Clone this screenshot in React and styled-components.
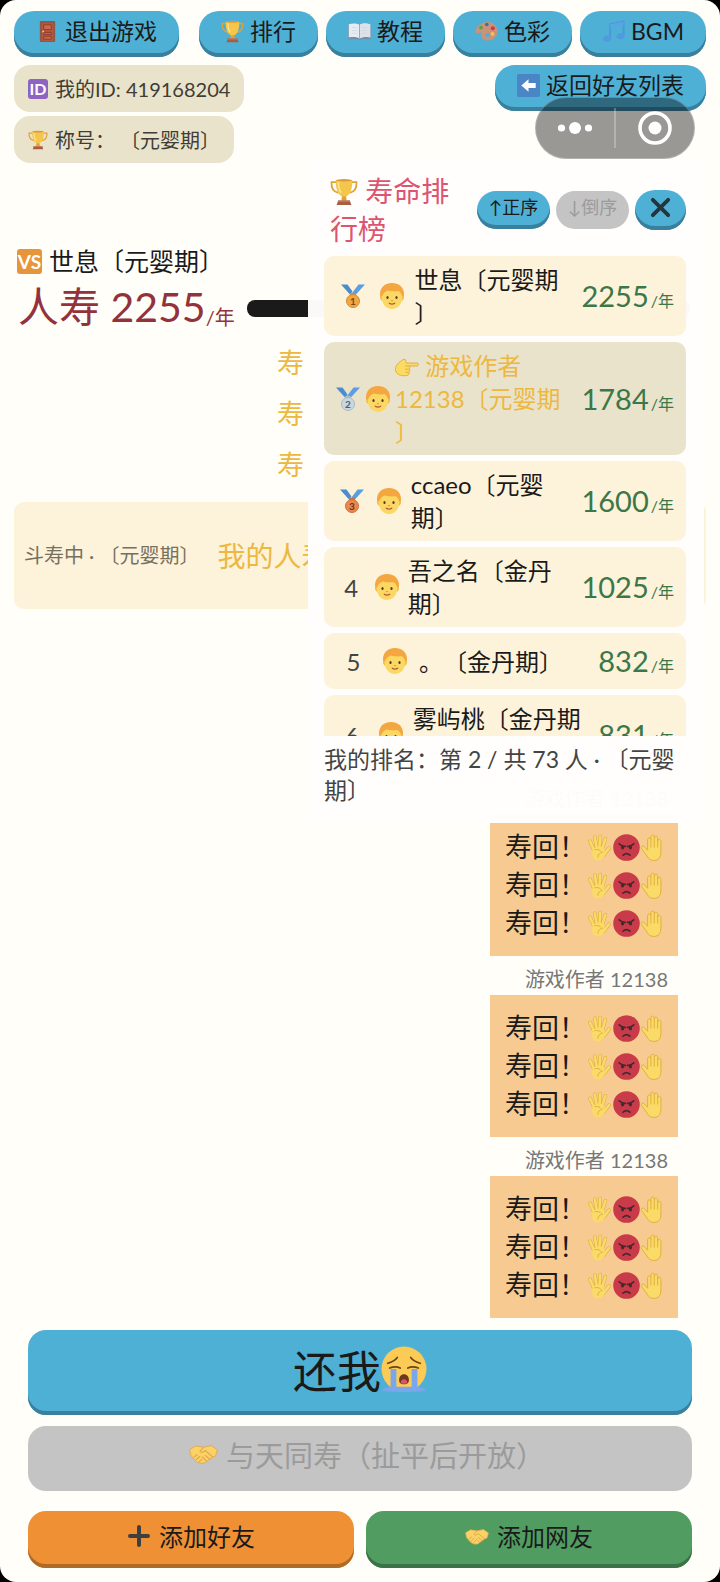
import React from "react";
import styled, { createGlobalStyle } from "styled-components";

const GlobalStyle = createGlobalStyle`
	* { box-sizing: border-box; }
	body {
		margin: 0;
		background: #000;
		font-family: Lato, "Noto Sans CJK SC", sans-serif;
		color: #1a1a1a;
		text-spacing-trim: space-all;
	}
	button {
		font-family: inherit;
		color: inherit;
		margin: 0;
		border: 0;
		cursor: pointer;
	}
	button:disabled { cursor: default; }
`;

const StyledApp = styled.div`
	position: relative;
	display: flex;
	flex-direction: column;
	min-height: 100vh;
	padding: 11px 14px 14px;
	border-radius: 16px;
	background: #fffef9;
	overflow: hidden;
`;

const Icon = styled.svg`
	flex: none;
	width: ${p => p.$size || "1em"};
	height: ${p => p.$size || "1em"};
	display: inline-block;
	vertical-align: -4px;
`;

const TopBar = styled.nav`
	display: flex;
	justify-content: space-between;
`;

const TopBarGroup = styled.div`
	display: flex;
	gap: 8px;
`;

const PillButton = styled.button`
	display: flex;
	align-items: center;
	justify-content: center;
	gap: 6px;
	height: 46px;
	padding: 0 22px 6px;
	border-radius: 20px;
	background: #4fb0d6;
	box-shadow: inset 0 -4px 0 #3a7f9b;
	font-size: 23px;
	line-height: 32px;
	white-space: nowrap;
`;

const InfoRow = styled.div`
	display: flex;
	justify-content: space-between;
	align-items: flex-start;
	margin-top: 8px;
`;

const TagList = styled.div`
	display: flex;
	flex-direction: column;
	align-items: flex-start;
	gap: 4px;
`;

const Tag = styled.div`
	display: flex;
	align-items: center;
	gap: 7px;
	height: 47px;
	padding: 0 14px;
	border-radius: 16px;
	background: #eae3cb;
	color: #403d35;
	font-size: 20px;
	line-height: 32px;
	white-space: pre;
`;

const Badge = styled.span`
	display: grid;
	place-items: center;
	width: 1em;
	height: 1em;
	border-radius: 3px;
	background: ${p => p.$color};
	color: #fff;

	b {
		font-size: ${p => p.$text}px;
		line-height: 1;
	}
`;

const Capsule = styled.div`
	position: absolute;
	top: 97px;
	right: 25px;
	z-index: 3;
	display: flex;
	align-items: center;
	width: 160px;
	height: 62px;
	border: 1px solid rgba(255, 255, 255, .25);
	border-radius: 31px;
	background: rgba(0, 0, 0, .4);
`;

const CapsuleButton = styled.button`
	display: grid;
	place-items: center;
	flex: 1;
	height: 40px;
	padding: 0;
	background: none;

	& + & { border-left: 2px solid rgba(255, 255, 255, .25); }
`;

const Opponent = styled.section`
	margin-top: 80px;
`;

const OpponentName = styled.div`
	display: flex;
	align-items: center;
	gap: 7px;
	padding-left: 3px;
	font-size: 25px;
	line-height: 36px;
`;

const LifeRow = styled.div`
	display: flex;
	align-items: center;
	gap: 12px;
	height: 58px;
	padding: 0 16px 0 4px;
`;

const Life = styled.div`
	padding-top: 8px;
	color: #94323c;
	font-size: 41px;
	line-height: 60px;
	white-space: nowrap;

	small {
		font-size: 20px;
		vertical-align: -3px;
	}
`;

const LifeBar = styled.div`
	flex: 1;
	height: 17px;
	border-radius: 8px;
	background: #1a1a1a;
`;

const Wishes = styled.div`
	width: 166px;
	margin: 0 auto;
	color: #ecb840;
	font-size: 27px;
	line-height: 51px;
`;

const DuelCard = styled.section`
	display: flex;
	align-items: center;
	gap: 18px;
	height: 107px;
	margin-top: 12px;
	padding: 0 10px 2px;
	border-radius: 10px;
	background: #fdf2da;
	white-space: nowrap;
`;

const DuelState = styled.span`
	color: #77705f;
	font-size: 20px;
`;

const DuelLife = styled.span`
	color: #ecb840;
	font-size: 28px;
`;

const Chat = styled.section`
	flex: 1;
	display: flex;
	flex-direction: column;
	justify-content: flex-end;
	align-items: flex-end;
	margin: 0 14px;
	padding-right: 14px;
`;

const Sender = styled.div`
	padding-right: 10px;
	color: #777;
	font-size: 20px;
	line-height: 31px;
	margin-top: 8px;
`;

const Bubble = styled.div`
	padding: 14px 11px 14px 15px;
	background: #f7ca91;
	font-size: 27px;
	line-height: 38px;
`;

const BubbleLine = styled.div`
	display: flex;
	align-items: center;
`;

const Actions = styled.footer`
	display: flex;
	flex-direction: column;
	margin: 12px 14px 0;
`;

const ActionRow = styled.div`
	display: flex;
	gap: 12px;
	margin-top: 20px;
`;

const actionTones = {
	blue: ["#4fb0d6", "#3a7f9b"],
	orange: ["#ef9034", "#b06a27"],
	green: ["#519d61", "#3b7247"],
};

const ActionButton = styled.button`
	display: flex;
	align-items: center;
	justify-content: center;
	gap: 8px;
	flex: 1 1 0;
	min-height: 57px;
	padding: 0 0 8px;
	border-radius: 18px;
	background: ${p => actionTones[p.$tone][0]};
	box-shadow: inset 0 -4px 0 ${p => actionTones[p.$tone][1]};
	font-size: 24px;
`;

const MainButton = styled(ActionButton)`
	gap: 0;
	flex: none;
	height: 85px;
	font-size: 44px;
`;

const LockedButton = styled(ActionButton)`
	flex: none;
	height: 65px;
	margin-top: 11px;
	padding: 0 0 10px 14px;
	background: #c4c4c4;
	box-shadow: none;
	color: #9b9b9b;
	font-size: 29px;
`;

const RankPanel = styled.aside`
	position: absolute;
	top: 160px;
	right: 16px;
	z-index: 2;
	width: 55%;
	padding: 12px 18px 17px 16px;
	background: rgba(255, 254, 253, .98);
`;

const RankHeader = styled.header`
	display: flex;
	align-items: center;
	gap: 6px;
`;

const RankTitle = styled.h2`
	flex: 1;
	margin: 0 20px 0 0;
	padding-left: 6px;
	color: #dd5470;
	font-size: 28px;
	font-weight: 400;
	line-height: 38px;
`;

const SortButton = styled(PillButton)`
	gap: 2px;
	height: 38px;
	width: 73px;
	padding: 0 0 6px;
	font-size: 18px;
	line-height: 24px;

	&:disabled {
		background: #c4c4c4;
		box-shadow: none;
		color: #9b9b9b;
	}
`;

const CloseButton = styled(PillButton)`
	width: 51px;
	height: 40px;
	padding: 0 0 6px;
`;

const RankList = styled.ol`
	display: flex;
	flex-direction: column;
	gap: 6px;
	height: 480px;
	margin: 8px 0;
	padding: 0;
	overflow: hidden;
	list-style: none;
`;

const RankRow = styled.li`
	display: flex;
	align-items: center;
	flex: none;
	padding: 7px 12px;
	border-radius: 10px;
	background: ${p => p.$mine ? "#eae3cb" : "#fdf2da"};
	font-size: 24px;
	line-height: 33px;
`;

const RankPlace = styled.div`
	display: flex;
	justify-content: center;
	flex: 0 1 35px;
	min-width: 24px;
	color: #444;
`;

const RankFace = styled.div`
	display: flex;
	justify-content: center;
	flex: 0 1 48px;
	min-width: 35px;
`;

const RankName = styled.div`
	flex: 1 1 auto;
	min-width: 0;
	color: ${p => p.$mine ? "#ecb840" : "inherit"};
`;

const RankLife = styled.div`
	flex: none;
	padding-left: 8px;
	color: #3b7748;
	font-size: 29px;
	line-height: 42px;

	small {
		margin-left: 2px;
		font-size: 16px;
		line-height: 1;
	}
`;

const RankFooter = styled.p`
	margin: 0;
	color: #444;
	font-size: 23px;
	line-height: 31px;
`;

const Door = () => (
	<Icon viewBox="0 0 24 24">
		<rect x="4" y="1" width="16" height="22" rx="1" fill="#8c5a4a" />
		<rect x="6" y="3" width="12" height="19" fill="#b5573c" />
		<path d="M8 5h8v5H8zM8 13h8v2H8zM8 17h8v3H8z" fill="#c96a4b" stroke="#8d3f2b" strokeWidth="1" />
		<circle cx="7.5" cy="12" r="1" fill="#f0c75a" />
	</Icon>
);

const Trophy = () => (
	<Icon viewBox="0 0 24 24">
		<path d="M6 3.6H1.3c-.3 5 1.5 8.2 6 9.2M18 3.6h4.700c.3 5-1.5 8.2-6 9.2" fill="none" stroke="#e2a136" strokeWidth="1.5" />
		<path d="M10.5 14h3l.8 5.5H9.700z" fill="#e2a136" />
		<path d="M5 1.8h14c.2 7-1.2 12.2-5 14h-4C6.200 14 4.800 8.800 5 1.800z" fill="#f5c64c" />
		<path d="M7.200 3.500c0 4 .6 7 2.300 9.200" fill="none" stroke="#fde68d" strokeWidth="1.3" />
		<ellipse cx="12" cy="1.9" rx="7" ry="1" fill="#dd9a35" />
		<path d="M7 19.200h10l1.300 4H5.700z" fill="#a65e42" />
		<path d="M7 19.200h10l.4 1.200H6.600z" fill="#c87c57" />
	</Icon>
);

const Book = () => (
	<Icon viewBox="0 0 24 24">
		<path d="M0 6h24v14H14l-2 1.200L10 20H0z" fill="#6f8fae" />
		<path d="M.8 4.500C5 3.200 9 3.400 12 5.200c3-1.800 7-2 11.200-.7V18.200c-4-.8-8.200-.6-11.200 1-3-1.600-7.200-1.800-11.200-1z" fill="#e8ecf2" />
		<path d="M12 5.200c3-1.800 7-2 11.200-.7V18.200c-4-.8-8.200-.6-11.200 1z" fill="#dbe2ea" />
		<path d="M12 5v14" fill="none" stroke="#98a7b8" strokeWidth="1" />
		<path d="M4 8c2-.4 4-.3 6 .3M4 11c2-.4 4-.3 6 .3M4 14c2-.4 4-.3 6 .3M14 8.300c2-.6 4-.7 6-.3M14 11.300c2-.6 4-.7 6-.3M14 14.300c2-.6 4-.7 6-.3" fill="none" stroke="#cbd4de" strokeWidth=".7" />
	</Icon>
);

const Palette = () => (
	<Icon viewBox="0 0 24 24">
		<path d="M8 3.500C15-.5 23.500 4 23.300 12c-.2 6.500-6 9.800-11 9.300-5-.4-5.800-3.800-5.500-6.300C7 13 5.500 12.500 4 13.500c-1.800 1.200-4.200.5-3.400-2.500C1.600 7.500 4.500 5 8 3.500zm3 11.500c-1 2 1.200 3.300 3 2.600 1.500-.6 2.600-2.600 1-3.600-1.500-1-3.300-.5-4 1z" fill="#c99279" />
		<circle cx="6.300" cy="8" r="1.900" fill="#5c9f48" />
		<circle cx="12.300" cy="4.700" r="1.900" fill="#3d6da8" />
		<circle cx="18.600" cy="8.500" r="2.100" fill="#d8343d" />
		<circle cx="18.300" cy="14.500" r="2" fill="#f4c545" />
	</Icon>
);

const Notes = () => (
	<Icon viewBox="0 0 24 24">
		<path d="M8.500 19V4.500L22.500 1.500v15" fill="none" stroke="#4a97da" strokeWidth="2" />
		<path d="M8.500 4.500l14-3v4l-14 3z" fill="#5aa5e4" />
		<ellipse cx="5.300" cy="19.500" rx="4.200" ry="3.200" fill="#4f9bdd" />
		<ellipse cx="19.300" cy="17" rx="4.200" ry="3.200" fill="#4f9bdd" />
	</Icon>
);

const BackArrow = () => (
	<Icon viewBox="0 0 24 24">
		<rect x="0" y="0" width="24" height="24" rx="1.500" fill="#4a86c5" />
		<path d="M4.500 12l7.500-6.500v4h7.500v5H12v4z" fill="#fff" />
	</Icon>
);

const medalColors = [
	["#efa644", "#d88a34", "#7b4a1c"],
	["#cbd6df", "#a9bac7", "#4c6073"],
	["#ea8850", "#cf6f3c", "#6d331c"],
];

function Medal({ place }) {
	const [fill, rim, ink] = medalColors[place - 1];
	return (
		<Icon viewBox="0 0 24 24">
			<path d="M0 .5h6.500l5 7-2.500 3z" fill="#4b8ccf" />
			<path d="M24 .5h-6.500l-8 10.500h5z" fill="#5b9fe0" />
			<rect x="9" y="9" width="6" height="3" rx="1" fill={rim} />
			<circle cx="12" cy="17" r="6.500" fill={fill} stroke={rim} strokeWidth="1" />
			<text x="12" y="20.500" textAnchor="middle" fontSize="10" fontWeight="700" fill={ink}>{ place }</text>
		</Icon>
	);
}

const Face = () => (
	<Icon viewBox="0 0 26 28" $size="28px">
		<path d="M13 1C5 1 .8 6.500 1 12.500c.1 2.500.6 4.500 1.500 6h21c.9-1.500 1.400-3.500 1.500-6C25.200 6.500 21 1 13 1z" fill="#f4a740" />
		<circle cx="2.800" cy="16" r="1.800" fill="#f6c04c" />
		<circle cx="23.200" cy="16" r="1.800" fill="#f6c04c" />
		<path d="M2.800 15c1.200-3.500 3-5.500 6-6.500 5 1.500 9.500.5 11.500 1 1.700 1.500 2.700 3.300 2.900 5.500.3 7-4.500 12-10.200 12S2.500 22 2.800 15z" fill="#fbd863" />
		<ellipse cx="8.500" cy="15.500" rx="1.100" ry="1.500" fill="#523a26" />
		<ellipse cx="17.500" cy="15.500" rx="1.100" ry="1.500" fill="#523a26" />
		<path d="M12 18.500q1 .7 2 0" fill="none" stroke="#d99a2c" strokeWidth="1" />
		<path d="M10.300 21.200q2.700 1.900 5.400 0" fill="none" stroke="#b5583a" strokeWidth="1.300" strokeLinecap="round" />
	</Icon>
);

const Pointing = () => (
	<Icon viewBox="0 0 24 24">
		<path d="M11 8h11.200c1.500 0 1.500 3 0 3h-8.400c1.500.7 1.600 2.700.3 3.200 1.200.9 1 2.700-.3 3.100.8 1.300 0 2.900-1.700 3.200-5 .8-10.700-.3-11.700-5.500-.4-4.500 3.600-8 7.600-10.300 2-1.200 3.700.5 2.700 1.800z" fill="#fbdb62" stroke="#dda53a" strokeWidth=".8" />
		<path d="M13.800 11H10M14 14.200h-4M13.800 17.300h-3.500" fill="none" stroke="#dda53a" strokeWidth=".8" />
	</Icon>
);

const SpreadHand = () => (
	<Icon viewBox="0 0 24 24">
		<g fill="none" strokeLinecap="round">
			<path d="M7.500 15L3.500 6.500M9.500 12L7.800 3M12 12l.6-9.700M14.500 13l2.700-8.700M15.500 19l5-6.500" stroke="#deaa3c" strokeWidth="3.200" />
			<path d="M7.500 15L3.500 6.500M9.500 12L7.800 3M12 12l.6-9.700M14.500 13l2.700-8.700M15.500 19l5-6.500" stroke="#fbdb68" strokeWidth="2.300" />
		</g>
		<path d="M6 12.500l9.300-1.500 1.700 7c-1.500 3.500-3.500 5.500-6.500 5.500C6 23.500 4.500 19 6 12.500z" fill="#fbdb68" />
		<path d="M10.500 21c0-3 2-4.500 4.500-5M7.500 14c3-.5 5 0 6 1.500" fill="none" stroke="#deaa3c" strokeWidth=".8" />
	</Icon>
);

const RaisedHand = () => (
	<Icon viewBox="0 0 24 24">
		<path d="M6.800 14.500V5c0-2 2.900-2 2.900 0V2.500c0-2 3-2 3 0v1c0-2 3-2 3 0v2.800c0-1.900 2.900-1.900 2.900 0V16c0 5-2.300 7.500-6.100 7.500-3.500 0-5-1.500-6.300-4L1.500 13c-1-2 1-3 2.300-1.700z" fill="#fbdb68" stroke="#deaa3c" strokeWidth=".8" />
		<path d="M9.700 5v7M12.700 3.500V12M15.700 6V12" stroke="#deaa3c" strokeWidth=".8" />
	</Icon>
);

const Angry = () => (
	<Icon viewBox="0 0 24 24">
		<circle cx="12" cy="12" r="11.800" fill="#c93b49" />
		<path d="M5.500 8.800q3 2.600 5.500 2.200M18.500 8.800Q15.500 11.400 13 11" fill="none" stroke="#422b2e" strokeWidth="1.500" strokeLinecap="round" />
		<ellipse cx="8.500" cy="12" rx="1.400" ry="1.800" fill="#422b2e" />
		<ellipse cx="15.500" cy="12" rx="1.400" ry="1.800" fill="#422b2e" />
		<path d="M9 18.800Q12 16 15 18.800" fill="none" stroke="#422b2e" strokeWidth="1.600" strokeLinecap="round" />
	</Icon>
);

const Crying = () => (
	<Icon viewBox="0 0 48 48" $size="46px">
		<circle cx="24" cy="24" r="23.500" fill="#fbcb56" />
		<path d="M10 24h6v19h-6zM32 24h6v19h-6z" fill="#7aa7ec" />
		<path d="M1 46.500c2-3 6-4 11-4h24c5 0 9 1 11 4-5 2-41 2-46 0z" fill="#7aa7ec" />
		<path d="M7 18q7-2 10-6M41 18q-7-2-10-6M9 23q6-2.500 11 0M39 23q-6-2.500-11 0" fill="none" stroke="#6b4518" strokeWidth="1.800" strokeLinecap="round" />
		<path d="M19 37c-1.500-10 11.500-10 10 0-1 4-9 4-10 0z" fill="#6b3a22" />
		<path d="M20.500 38c1-4.500 6-4.500 7 0-1 2-6 2-7 0z" fill="#e05468" />
	</Icon>
);

const Handshake = () => (
	<Icon viewBox="0 0 24 24">
		<path d="M.5 8.800l5-3 6.500 1L18.500 5.500l5 3.500-1.500 5-3 1.300-5.500 4.200c-3 1.500-7 .3-9.500-3L1.500 13.500z" fill="#fbd268" stroke="#e3a545" strokeWidth=".7" />
		<path d="M12 7L9 10.300c1 1.300 3 .7 4.500-.7L19.500 14.800M13.500 13.500l3.700 3.300M11 14.800l3.500 3.400M4 15l2.800-2M6 17l3-2.500M8.500 18.800l2.300-2.200" fill="none" stroke="#e3a545" strokeWidth=".9" strokeLinecap="round" />
	</Icon>
);

const Plus = () => (
	<Icon viewBox="0 0 24 24">
		<path d="M12 3v18M3 12h18" stroke="#3d403c" strokeWidth="4" strokeLinecap="round" />
	</Icon>
);

const Cross = () => (
	<Icon viewBox="0 0 24 24">
		<path d="M4 4l16 16M20 4L4 20" stroke="#26343b" strokeWidth="4" strokeLinecap="round" />
	</Icon>
);

const More = () => (
	<Icon viewBox="0 0 36 36" $size="36px">
		<g fill="#fff">
			<circle cx="4.500" cy="18" r="3.600" />
			<circle cx="18" cy="18" r="6" />
			<circle cx="31.500" cy="18" r="3.600" />
		</g>
	</Icon>
);

const Target = () => (
	<Icon viewBox="0 0 36 36" $size="36px">
		<circle cx="18" cy="18" r="15" fill="none" stroke="#fff" strokeWidth="3.600" />
		<circle cx="18" cy="18" r="6.500" fill="#fff" />
	</Icon>
);

// \u200b lets the closing bracket drop to the next line by itself
const ranking = [
	{ name: "世息〔元婴期\u200b〕", life: 2255 },
	{ name: "游戏作者 12138〔元婴期\u200b〕", life: 1784, mine: true },
	{ name: "ccaeo〔元婴期〕", life: 1600 },
	{ name: "吾之名〔金丹期〕", life: 1025 },
	{ name: "。〔金丹期〕", life: 832 },
	{ name: "雾屿桃〔金丹期\u200b〕", life: 831 },
];

function Ranking() {
	return (
		<RankPanel>
			<RankHeader>
				<RankTitle><Trophy /> 寿命排行榜</RankTitle>
				<SortButton type="button">↑正序</SortButton>
				<SortButton type="button" disabled>↓倒序</SortButton>
				<CloseButton type="button" aria-label="关闭"><Cross /></CloseButton>
			</RankHeader>
			<RankList>
				{ ranking.map((r, index) => (
					<RankRow key={index} $mine={r.mine}>
						<RankPlace>{ index < 3 ? <Medal place={index + 1} /> : index + 1 }</RankPlace>
						<RankFace><Face /></RankFace>
						<RankName $mine={r.mine}>
							{ r.mine && <><Pointing />{" "}</> }
							{ r.name }
						</RankName>
						<RankLife>{ r.life }<small>/年</small></RankLife>
					</RankRow>
				))}
			</RankList>
			<RankFooter>我的排名：第 2 / 共 73 人 · 〔元婴期〕</RankFooter>
		</RankPanel>
	);
}

function Message() {
	return (
		<>
			<Sender>游戏作者 12138</Sender>
			<Bubble>
				{ [0, 1, 2].map(line => (
					<BubbleLine key={line}>寿回！<SpreadHand /><Angry /><RaisedHand /></BubbleLine>
				))}
			</Bubble>
		</>
	);
}

export default function App() {
	return (
		<>
			<GlobalStyle />
			<StyledApp>
				<TopBar>
					<PillButton type="button"><Door />退出游戏</PillButton>
					<TopBarGroup>
						<PillButton type="button"><Trophy />排行</PillButton>
						<PillButton type="button"><Book />教程</PillButton>
						<PillButton type="button"><Palette />色彩</PillButton>
						<PillButton type="button"><Notes />BGM</PillButton>
					</TopBarGroup>
				</TopBar>
				<InfoRow>
					<TagList>
						<Tag><Badge $color="#8f63c0" $text={16}><b>ID</b></Badge>我的ID: 419168204</Tag>
						<Tag><Trophy />称号： 〔元婴期〕</Tag>
					</TagList>
					<PillButton type="button"><BackArrow />返回好友列表</PillButton>
				</InfoRow>
				<Capsule>
					<CapsuleButton type="button" aria-label="更多"><More /></CapsuleButton>
					<CapsuleButton type="button" aria-label="关闭小程序"><Target /></CapsuleButton>
				</Capsule>

				<Opponent>
					<OpponentName><Badge $color="#e6953a" $text={19}><b>VS</b></Badge>世息〔元婴期〕</OpponentName>
					<LifeRow>
						<Life>人寿 2255<small>/年</small></Life>
						<LifeBar />
					</LifeRow>
				</Opponent>
				<Wishes>
					<div>寿</div>
					<div>寿</div>
					<div>寿</div>
				</Wishes>
				<DuelCard>
					<DuelState>斗寿中 · 〔元婴期〕</DuelState>
					<DuelLife>我的人寿</DuelLife>
				</DuelCard>

				<Chat>
					<Message />
					<Message />
					<Message />
				</Chat>
				<Actions>
					<MainButton type="button" $tone="blue">还我<Crying /></MainButton>
					<LockedButton type="button" $tone="blue" disabled><Handshake />与天同寿（扯平后开放）</LockedButton>
					<ActionRow>
						<ActionButton type="button" $tone="orange"><Plus />添加好友</ActionButton>
						<ActionButton type="button" $tone="green"><Handshake />添加网友</ActionButton>
					</ActionRow>
				</Actions>
				<Ranking />
			</StyledApp>
		</>
	);
}
